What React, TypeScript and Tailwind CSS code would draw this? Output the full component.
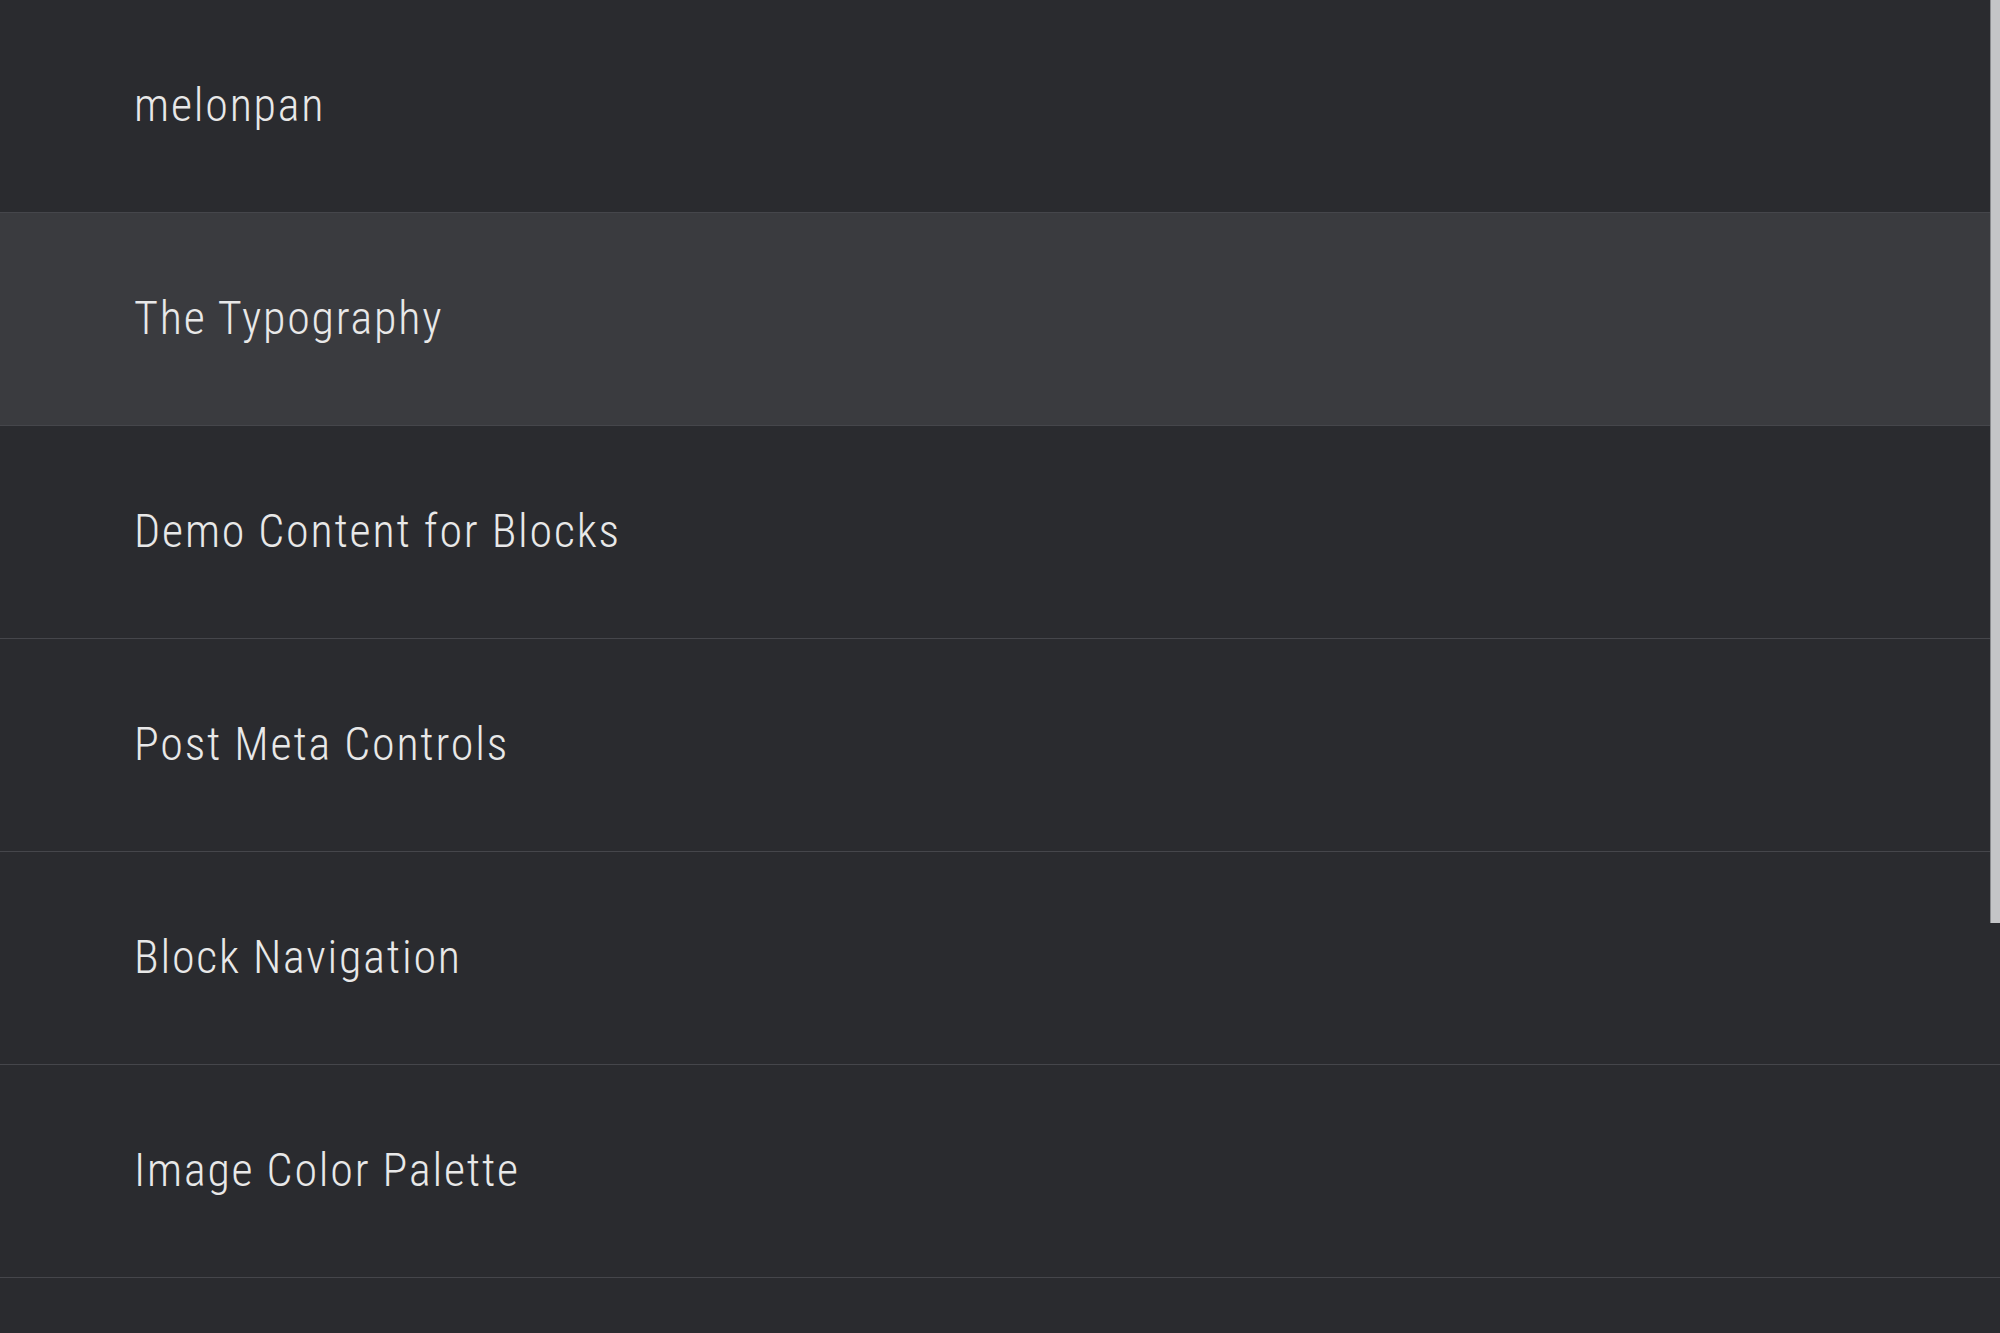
import React from 'react'

const items = [
  'melonpan',
  'The Typography',
  'Demo Content for Blocks',
  'Post Meta Controls',
  'Block Navigation',
  'Image Color Palette',
  '',
]

export default function App() {
  return (
    <div className="relative h-[1333px] w-[2000px] overflow-hidden bg-[#2a2b2f]">
      <ul className="flex flex-col">
        {items.map((t, i) => (
          <li
            key={i}
            className={
              'flex h-[213px] shrink-0 items-center border-b border-[#45464b] pb-[2px] pl-[134px] ' +
              (i === 1 ? 'bg-[#3a3b3f]' : 'bg-[#2a2b2f]')
            }
          >
            <span
              className="text-[46px] font-light tracking-[1.8px] text-[#e8e8e8]"
              style={{ fontFamily: 'Roboto, sans-serif', fontStretch: 'condensed' }}
            >
              {t}
            </span>
          </li>
        ))}
      </ul>
      <div className="absolute right-0 top-0 h-[923px] w-[10px] border-l border-[#8a8b8e] bg-[#c4c5c7]" />
    </div>
  )
}
